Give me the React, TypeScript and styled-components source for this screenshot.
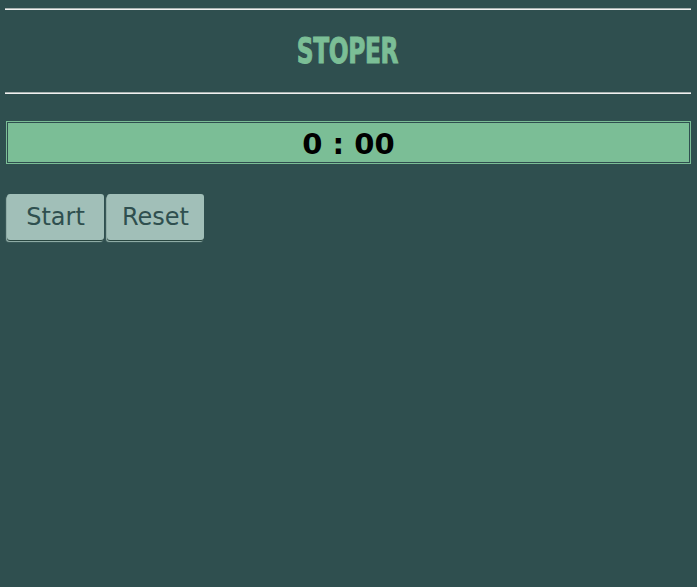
import React from "react";
import styled, { createGlobalStyle } from "styled-components";

const Global = createGlobalStyle`
  html, body {
    margin: 0;
    padding: 0;
    background: #2f4f4f;
    min-height: 100%;
  }
  body {
    font-family: "DejaVu Sans", Verdana, sans-serif;
  }
`;

const Page = styled.div`
  min-height: 587px;
  box-sizing: border-box;
  padding: 8px 6px 0 5px;
  background: #2f4f4f;
`;

const Rule = styled.div`
  height: 0;
  border-top: 1px solid #a9b3b1;
  border-bottom: 1px solid #f0f0f0;
`;

const Header = styled.div`
  height: 82px;
  display: flex;
  align-items: center;
  justify-content: center;
`;

const Title = styled.h1`
  margin: 0 2px 0 0;
  font-family: Impact, "DejaVu Sans Condensed", "DejaVu Sans", sans-serif;
  font-weight: 700;
  font-size: 36px;
  line-height: 1;
  color: #7bbe96;
  letter-spacing: -0.5px;
  -webkit-text-stroke: 1px #7bbe96;
  display: inline-block;
  transform: scaleX(0.72);
`;

const Display = styled.div`
  margin-top: 27px;
  margin-left: 1px;
  border: 1px solid #7bbe96;
  padding: 1px;
`;

const DisplayInner = styled.div`
  height: 39px;
  box-sizing: border-box;
  padding-top: 3px;
  background: #7bbe96;
  display: flex;
  align-items: center;
  justify-content: center;
  font-family: "DejaVu Sans", Verdana, sans-serif;
  font-weight: 700;
  font-size: 29px;
  color: #000;
`;

const Controls = styled.div`
  margin-top: 30px;
  display: flex;
  gap: 3px;
  padding-left: 2px;
`;

const Button = styled.button`
  width: 97px;
  height: 46px;
  border: none;
  border-radius: 3px;
  background: #a1bfb8;
  color: #2f4f4f;
  font-family: "DejaVu Sans", Verdana, sans-serif;
  font-size: 24px;
  padding: 0;
  box-shadow: 0 1px 0 #28453f, -1px 2px 1px #9ab5ae;
  cursor: pointer;
`;

export default function App() {
  return (
    <>
      <Global />
      <Page>
        <Rule />
        <Header>
          <Title>STOPER</Title>
        </Header>
        <Rule />
        <Display>
          <DisplayInner>0 : 00</DisplayInner>
        </Display>
        <Controls>
          <Button>Start</Button>
          <Button>Reset</Button>
        </Controls>
      </Page>
    </>
  );
}
